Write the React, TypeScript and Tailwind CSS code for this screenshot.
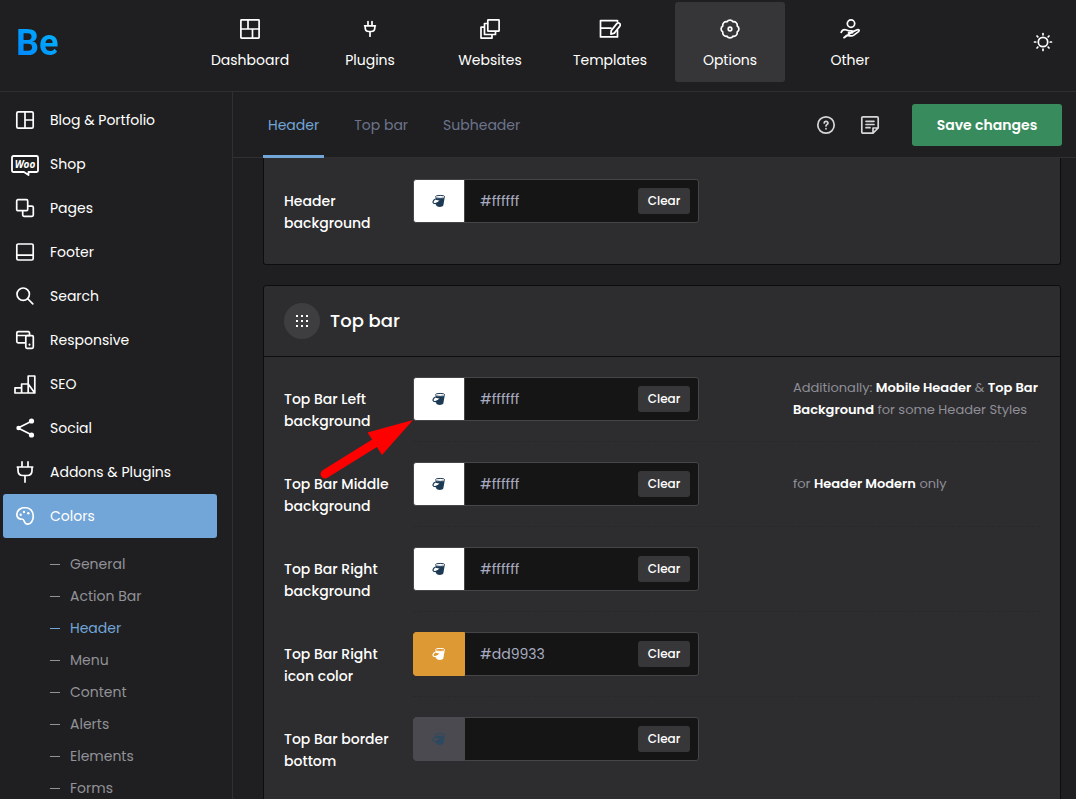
import { useState } from 'react'
import type { ReactNode } from 'react'
import clsx from 'clsx'

type IconProps = { className?: string; size?: number; children: ReactNode }

function Icon({ className, size = 20, children }: IconProps) {
  return (
    <svg
      width={size}
      height={size}
      viewBox={`0 0 ${size} ${size}`}
      fill="none"
      stroke="currentColor"
      strokeWidth="1.7"
      strokeLinejoin="round"
      strokeLinecap="round"
      aria-hidden="true"
      className={clsx('shrink-0', className)}
    >
      {children}
    </svg>
  )
}

const navItems = [
  {
    name: 'Dashboard',
    icon: (
      <Icon>
        <rect x=".9" y=".9" width="18.2" height="18.2" rx=".6" />
        <path d="M1 10h18M8 1v9M12.5 10v9" />
      </Icon>
    ),
  },
  {
    name: 'Plugins',
    icon: (
      <Icon>
        <path d="M8 2.5v4M12 2.5v4M4.6 6.8h10.8M5.2 6.8v2q0 3.7 3.7 3.7h2.2q3.7 0 3.7-3.7v-2M10 12.7v4.5" />
      </Icon>
    ),
  },
  {
    name: 'Websites',
    icon: (
      <Icon>
        <rect x="7.8" y=".9" width="11.3" height="11.3" rx=".5" />
        <path d="M7.5 4.5h-3v11h11v-3M4.3 8.2H1v10.9h11v-3.4" />
      </Icon>
    ),
  },
  {
    name: 'Templates',
    icon: (
      <Icon size={22}>
        <path d="M18.5 3.5v-.9H1.5v16.3h17v-6.5M1.5 10.2H12" />
        <path d="m12.2 12.6 5.6-7a2 2 0 0 1 3.1 2.5l-5.6 7-3.4 1z" />
      </Icon>
    ),
  },
  {
    name: 'Options',
    icon: (
      <Icon>
        <path d="M7 2.8a3.5 3.5 0 0 1 6 0a3.5 3.5 0 0 1 4.2 4.2a3.5 3.5 0 0 1 0 6a3.5 3.5 0 0 1-4.2 4.2a3.5 3.5 0 0 1-6 0a3.5 3.5 0 0 1-4.2-4.2a3.5 3.5 0 0 1 0-6a3.5 3.5 0 0 1 4.2-4.2z" />
        <circle cx="10" cy="10" r="1.8" />
      </Icon>
    ),
  },
  {
    name: 'Other',
    icon: (
      <Icon>
        <circle cx="11" cy="4.6" r="3.7" />
        <path d="M1.2 13.3c1-2.2 3-3 5.2-2.3l2.3.8h3.2c1.4 0 1.4 2 0 2.1H8.5M12.9 12.6l4.4-1.9c1.6-.6 2.4.8 1.2 1.9l-4.300 3.300c-1.400 1-2.600 1.200-4.200.9l-3.300-.5L4 18.700z" />
      </Icon>
    ),
  },
]

const sidebarItems = [
  {
    name: 'Blog & Portfolio',
    icon: (
      <Icon>
        <rect x="1.8" y="1.8" width="16.4" height="16.4" rx="1.5" />
        <path d="M10 2v16M10 10h8" />
      </Icon>
    ),
  },
  {
    name: 'Shop',
    icon: (
      <svg width="28" height="24" viewBox="0 0 28 24" className="shrink-0" aria-hidden="true">
        <path
          d="M2.5 4h23q1.500 0 1.500 1.500V18.500q0 1.500-1.500 1.500H17.500v3l-4.500-3H2.500Q1 20 1 18.500V5.500Q1 4 2.500 4z"
          fill="none"
          stroke="currentColor"
          strokeWidth="1.8"
          strokeLinejoin="round"
        />
        <text
          x="14"
          y="15.5"
          textAnchor="middle"
          fontFamily="Open Sans, sans-serif"
          fontSize="10"
          fontWeight="700"
          fontStyle="italic"
          fill="currentColor"
        >
          Woo
        </text>
      </svg>
    ),
  },
  {
    name: 'Pages',
    icon: (
      <Icon>
        <rect x="1.7" y="1.7" width="11" height="11" rx="1.2" />
        <path d="M12.8 8.2h4.2q1.300 0 1.300 1.300v7.500q0 1.300-1.300 1.300H9q-1.300 0-1.300-1.300v-4" />
      </Icon>
    ),
  },
  {
    name: 'Footer',
    icon: (
      <Icon>
        <rect x="1.8" y="2" width="16.4" height="16" rx="1.5" />
        <path d="M2 13.2h16" />
      </Icon>
    ),
  },
  {
    name: 'Search',
    icon: (
      <Icon>
        <circle cx="8.2" cy="8.200" r="6.200" />
        <path d="m13 13 4.800 4.800" />
      </Icon>
    ),
  },
  {
    name: 'Responsive',
    icon: (
      <Icon>
        <path d="M14.5 5V3q0-1.300-1.300-1.300H3.200Q1.800 1.700 1.800 3v8.500q0 1.300 1.300 1.300h6.500M2 5.500h12.500" />
        <rect x="10.8" y="5.7" width="7.5" height="12.6" rx="1.2" />
        <path d="M14.5 14.500v.2" strokeWidth="2" />
      </Icon>
    ),
  },
  {
    name: 'SEO',
    icon: (
      <Icon size={22}>
        <path d="M1 20v-5.200h6.600V20M7.600 14.800V11h6.600v9M14.200 11V3h6.600v17zM1 20h19.800" />
      </Icon>
    ),
  },
  {
    name: 'Social',
    icon: (
      <Icon>
        <path d="m17 3-14 7 14 7" />
        <g fill="currentColor" stroke="none">
          <circle cx="3.5" cy="10" r="2.200" />
          <circle cx="16.500" cy="3" r="2.600" />
          <circle cx="16.500" cy="17" r="2.600" />
        </g>
      </Icon>
    ),
  },
  {
    name: 'Addons & Plugins',
    icon: (
      <Icon size={22}>
        <path d="M8 .9v4.900M14 .9v4.900M3.300 6h15.400M4 6v3.500q0 5 5 5h4q5 0 5-5V6M11 14.500v6.600" />
      </Icon>
    ),
  },
  {
    name: 'Colors',
    icon: (
      <Icon>
        <path d="M10 1.500c-4.500 0-8.200 3-8.200 6.800 0 3.300 2.300 5 4.700 4.700 2.300-.2 2.300 1.200 2.900 2.700.7 1.700 1.900 2.700 3.600 2.500 3.300-.4 5.300-4.200 5.300-8.200C18.300 4.800 14.800 1.500 10 1.500z" />
        <g fill="currentColor" stroke="none">
          <circle cx="5.700" cy="8.800" r="1.200" />
          <circle cx="9" cy="6" r="1.200" />
          <circle cx="13.300" cy="7.200" r="1.200" />
        </g>
      </Icon>
    ),
  },
]

const colorPages = ['General', 'Action Bar', 'Header', 'Menu', 'Content', 'Alerts', 'Elements', 'Forms']

const tabs = ['Header', 'Top bar', 'Subheader']

type Field = {
  id: string
  label: string
  value: string
  swatch: string
  note?: ReactNode
  pointer?: boolean
}

const whiteSwatch = 'border-[#464649] bg-white text-[#1d3a54]'

const headerField: Field = {
  id: 'header-bg',
  label: 'Header background',
  value: '#ffffff',
  swatch: whiteSwatch,
}

const topBarFields: Field[] = [
  {
    id: 'top-bar-left',
    label: 'Top Bar Left background',
    value: '#ffffff',
    swatch: whiteSwatch,
    note: (
      <>
        Additionally: <b>Mobile Header</b> &amp; <b>Top Bar Background</b> for some Header Styles
      </>
    ),
    pointer: true,
  },
  {
    id: 'top-bar-middle',
    label: 'Top Bar Middle background',
    value: '#ffffff',
    swatch: whiteSwatch,
    note: (
      <>
        for <b>Header Modern</b> only
      </>
    ),
  },
  {
    id: 'top-bar-right',
    label: 'Top Bar Right background',
    value: '#ffffff',
    swatch: whiteSwatch,
  },
  {
    id: 'top-bar-icon',
    label: 'Top Bar Right icon color',
    value: '#dd9933',
    swatch: 'border-[#dd9933] bg-[#dd9933] text-white',
  },
  {
    id: 'top-bar-border',
    label: 'Top Bar border bottom',
    value: '',
    swatch: 'border-[#4b4a50] bg-[#4b4a50] text-[#2d4961]',
  },
]

function Bucket() {
  return (
    <svg width="14" height="14" viewBox="0 0 14 14" fill="none" stroke="currentColor" aria-hidden="true">
      <path
        d="M3.5 3.5v2.300l4.500 1-4.200 2.800.5 2c.4 1.700 6.500 1.700 7 0l1.400-8.100c-2 1.600-7.200 1.600-9.200 0z"
        fill="currentColor"
        stroke="none"
      />
      <ellipse cx="8.100" cy="2.900" rx="4.700" ry="1.500" />
      <path d="M3.500 5C.6 6.300.3 9.100 2.300 9.500c2.200.3 4.700-1.200 5.700-3" strokeWidth="1.200" />
    </svg>
  )
}

function ColorRow({ field, last }: { field: Field; last?: boolean }) {
  const [value, setValue] = useState(field.value)

  return (
    <div className="relative flex px-5">
      <label htmlFor={field.id} className="w-[129px] shrink-0 pt-[31px] pr-4 leading-[22px] font-medium">
        {field.label}
      </label>
      <div
        className={clsx(
          'flex h-[85px] flex-1 gap-4 border-b border-dashed pt-5',
          last ? 'border-transparent' : 'border-[#29292b]'
        )}
      >
        <div className="flex h-11 w-[286px] shrink-0 rounded-[3px] bg-[#151515]">
          <button
            type="button"
            aria-label="Pick color"
            className={clsx('flex w-[52px] shrink-0 items-center justify-center rounded-l-[3px] border', field.swatch)}
          >
            <Bucket />
          </button>
          <div className="flex min-w-0 flex-1 items-center rounded-r-[3px] border border-l-0 border-[#464649] pr-2">
            <input
              id={field.id}
              type="text"
              value={value}
              onChange={(e) => setValue(e.target.value)}
              className="h-full min-w-0 flex-1 bg-transparent px-[15px] text-[#a9acc0] outline-none"
            />
            <button
              type="button"
              onClick={() => setValue('')}
              className="h-[26px] w-[52px] rounded-[3px] bg-[#37373a] text-xs font-medium"
            >
              Clear
            </button>
          </div>
        </div>
        {field.note && (
          <p className="ml-auto flex h-11 w-[247px] items-center text-[13px] leading-[22px] text-[#8f8f98] [&_b]:font-semibold [&_b]:text-white">
            <span>{field.note}</span>
          </p>
        )}
      </div>
      {field.pointer && (
        <svg width="100" height="64" viewBox="0 0 100 64" className="absolute top-[60px] left-[52px] z-10" aria-hidden="true">
          <path d="m9 57 50-31" stroke="#fe0000" strokeWidth="9" strokeLinecap="round" />
          <path d="M97 3 51.500 15.500 66 38z" fill="#fe0000" />
        </svg>
      )}
    </div>
  )
}

export default function App() {
  const [tab, setTab] = useState('Header')

  return (
    <div className="flex h-screen flex-col overflow-hidden bg-[#1f1f21] font-['Poppins','Inter',sans-serif] text-sm text-white">
      {/* Top navigation */}
      <header className="flex h-[92px] shrink-0 border-b border-[#303032]">
        <div className="flex w-[195px] shrink-0 items-center pb-1.5 pl-4">
          <a
            href="#"
            className="bg-linear-to-tr from-[#0080ff] to-[#12b8fa] bg-clip-text font-['Roboto',sans-serif] text-4xl font-bold text-transparent"
          >
            Be
          </a>
        </div>
        <nav className="flex gap-2.5 pt-0.5">
          {navItems.map((item) => (
            <a
              key={item.name}
              href="#"
              className={clsx(
                'flex h-20 w-[110px] flex-col items-center rounded-[3px] pt-4',
                item.name === 'Options' && 'bg-[#363638]'
              )}
            >
              <span className="flex h-[22px] items-center">{item.icon}</span>
              <span className="mt-[9px] leading-[22px]">{item.name}</span>
            </a>
          ))}
        </nav>
        <button type="button" aria-label="Toggle theme" className="mr-[23px] mb-2 ml-auto">
          <Icon>
            <circle cx="10" cy="10" r="4.700" />
            <path d="M10 1.500v1.300M10 17.200v1.300M1.500 10h1.300M17.200 10h1.300M4 4l.8.8M15.200 15.200l.8.8M4 16l.8-.8M15.200 4.800 16 4" />
          </Icon>
        </button>
      </header>

      <div className="flex min-h-0 flex-1">
        {/* Sidebar */}
        <aside className="w-[233px] shrink-0 overflow-hidden border-r border-[#303032] pt-1.5">
          <ul className="pr-[15px] pl-[3px]">
            {sidebarItems.map((item) => (
              <li key={item.name}>
                <a
                  href="#"
                  className={clsx(
                    'flex h-11 items-center rounded-[3px]',
                    item.name === 'Colors' && 'bg-[#72a5d8]'
                  )}
                >
                  <span className="flex w-11 justify-center">{item.icon}</span>
                  <span className="ml-[3px]">{item.name}</span>
                </a>
              </li>
            ))}
          </ul>
          <ul className="mt-2.5 pl-[50px]">
            {colorPages.map((page) => (
              <li key={page}>
                <a
                  href="#"
                  className={clsx(
                    'flex h-8 items-center gap-2.5',
                    page === 'Header' ? 'text-[#72a5d8]' : 'text-[#929298]'
                  )}
                >
                  <span className="h-px w-2.5 bg-current" />
                  {page}
                </a>
              </li>
            ))}
          </ul>
        </aside>

        <main className="flex min-w-0 flex-1 flex-col">
          {/* Tabs and actions */}
          <div className="flex h-[66px] shrink-0 items-center border-b border-[#303032] pr-3.5 pl-[30px]">
            <div className="flex gap-[25px] self-stretch">
              {tabs.map((name) => (
                <button
                  key={name}
                  type="button"
                  onClick={() => setTab(name)}
                  className={clsx(
                    '-mb-px border-b-3 px-[5px] pt-0.5',
                    tab === name ? 'border-[#72a5d8] text-[#72a5d8]' : 'border-transparent text-[#6c748c]'
                  )}
                >
                  {name}
                </button>
              ))}
            </div>
            <div className="ml-auto flex items-center gap-6 text-[#d6d6d6]">
              <button type="button" aria-label="Help">
                <Icon>
                  <circle cx="10" cy="10" r="8.200" />
                  <path d="M8.200 8a1.900 1.700 0 1 1 2.800 1.500q-1 .5-1 1.500M10 13.700v.1" />
                </Icon>
              </button>
              <button type="button" aria-label="Notes">
                <Icon>
                  <path d="M13 18.200H3q-1.200 0-1.200-1.200V3Q1.800 1.800 3 1.800h14q1.200 0 1.200 1.200v10zM13 18.200V13h5.200M6 6.300h8M6 9.500h8M6 12.700h4" />
                </Icon>
              </button>
            </div>
            <button type="button" className="ml-8 h-[42px] w-[150px] rounded-[3px] bg-[#388b5c] font-semibold">
              Save changes
            </button>
          </div>

          {/* Option cards */}
          <div className="flex min-h-0 flex-1 flex-col gap-5 overflow-hidden pr-[15px] pl-[30px]">
            <section className="shrink-0 rounded-b-[3px] border border-t-0 border-[#0d0d0e] bg-[#2d2d2f] pt-px pb-5">
              <ColorRow field={headerField} last />
            </section>

            <section className="shrink-0 rounded-[3px] border border-[#0d0d0e] bg-[#2d2d2f] pb-5">
              <div className="flex h-[71px] items-center gap-2.5 border-b border-[#0d0d0e] px-5">
                <span className="flex size-9 items-center justify-center rounded-full bg-[#3e3e40]">
                  <svg width="14" height="14" viewBox="0 0 14 14" fill="currentColor" aria-hidden="true">
                    {[1, 6, 11].map((y) => [1, 6, 11].map((x) => <rect key={`${x}-${y}`} x={x} y={y} width="2" height="2" />))}
                  </svg>
                </span>
                <h2 className="text-lg font-medium">Top bar</h2>
              </div>
              {topBarFields.map((field, i) => (
                <ColorRow key={field.id} field={field} last={i === topBarFields.length - 1} />
              ))}
            </section>
          </div>
        </main>
      </div>
    </div>
  )
}
